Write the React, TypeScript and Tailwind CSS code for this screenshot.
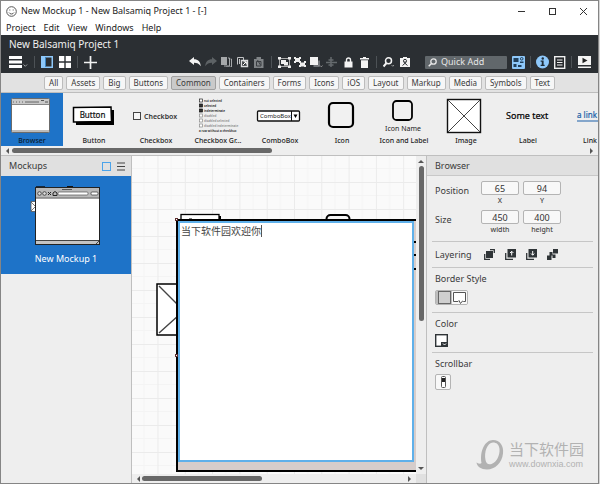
import { useState } from "react";
import type { ReactNode } from "react";

const CHIPS = ["All", "Assets", "Big", "Buttons", "Common", "Containers", "Forms", "Icons", "iOS", "Layout", "Markup", "Media", "Symbols", "Text"];

const GROUP_ROWS = [
  { text: "not selected", color: "#222", box: true },
  { text: "selected", color: "#111", box: true, on: true },
  { text: "indeterminate", color: "#111", box: true, on: true },
  { text: "disabled", color: "#888", box: true },
  { text: "disabled selected", color: "#888", box: true },
  { text: "disabled indeterminate", color: "#888", box: true },
  { text: "a row without a checkbox", color: "#222", box: false },
];

function ToolButton({ label, children, className = "w-4" }: { label: string; children: ReactNode; className?: string }) {
  return (
    <button type="button" aria-label={label} className={`flex h-4 shrink-0 items-center justify-center ${className}`}>
      {children}
    </button>
  );
}

function Separator({ wide = false }: { wide?: boolean }) {
  return (
    <span className={`flex shrink-0 justify-center ${wide ? "w-[9px]" : "w-px"}`}>
      <span className="h-3 w-px bg-[#4d5256]" />
    </span>
  );
}

function Arrow({ dir }: { dir: "left" | "right" | "up" | "down" }) {
  const points = {
    left: "5,0 5,6 2,3",
    right: "1,0 1,6 4,3",
    up: "0,5 6,5 3,2",
    down: "0,1 6,1 3,4",
  }[dir];
  return (
    <svg width="6" height="6" viewBox="0 0 6 6" className="shrink-0" aria-hidden="true">
      <polygon points={points} fill="#555" />
    </svg>
  );
}

function LibraryItem({ name, selected = false, children }: { name: string; selected?: boolean; children: ReactNode }) {
  return (
    <button
      type="button"
      className={`flex w-[62px] shrink-0 flex-col items-center ${selected ? "bg-[#1e73c8] text-[#0c1a2c]" : "text-[#222]"}`}
    >
      <svg width="62" height="42" viewBox="0 0 62 42" className="shrink-0" aria-hidden="true">
        {children}
      </svg>
      <span className="text-[7px] leading-[11px] font-medium whitespace-nowrap">{name}</span>
    </button>
  );
}

function Library() {
  return (
    <div className="flex h-[54px] shrink-0 overflow-hidden border-t border-[#bdbdbd] bg-[#eeeeee]">
      <LibraryItem name="Browser" selected>
        <rect x="10.500" y="5.500" width="38" height="34" rx="1" fill="#fff" stroke="#6b6b6b" />
        <rect x="11" y="6" width="37" height="5" fill="#c9c9c9" />
        <path d="M12 9h1M15 9h1M18 9h1M21 9h1M24 9h14" stroke="#666" />
        <path d="M40 7.500h3M44 9h3" stroke="#555" />
        <path d="M11 11.500h37" stroke="#888" />
        <rect x="11" y="37" width="37" height="2" fill="#bbb" />
      </LibraryItem>
      <LibraryItem name="Button">
        <path d="M13 17h38v15H13z" fill="#000" />
        <path d="M10.500 14.500l37.500-.5.500 14.500-38 .5z" fill="#fff" stroke="#000" strokeWidth="1.500" />
        <text x="29.500" y="25" fontSize="8" textAnchor="middle" fill="#111" stroke="#111" strokeWidth=".2">Button</text>
      </LibraryItem>
      <LibraryItem name="Checkbox">
        <rect x="8.500" y="19.500" width="7" height="7" fill="#f6f6f6" stroke="#444" />
        <text x="19" y="26" fontSize="7" fontWeight="600" fill="#333">Checkbox</text>
      </LibraryItem>
      <LibraryItem name="Checkbox Gr...">
        {GROUP_ROWS.map((row, i) => (
          <g key={row.text}>
            {row.box && <rect x="12.500" y={6 + i * 5} width="3" height="3" fill={row.on ? "#333" : "#fff"} stroke={row.color} strokeWidth=".7" />}
            <text x={row.box ? 17 : 12} y={9 + i * 5} fontSize="3" fontWeight="600" fill={row.color}>{row.text}</text>
          </g>
        ))}
      </LibraryItem>
      <LibraryItem name="ComboBox">
        <rect x="8.500" y="18" width="42" height="10" rx="1" fill="#fff" stroke="#111" strokeWidth="1.300" />
        <path d="M42.500 18v10" stroke="#111" />
        <path d="M44.500 21.500h4l-2 3.500z" fill="#000" />
        <text x="11" y="25" fontSize="6" fill="#222">ComboBox</text>
      </LibraryItem>
      <LibraryItem name="Icon">
        <rect x="18" y="10" width="24" height="24" rx="4" fill="#f1f1f1" stroke="#000" strokeWidth="2.200" />
      </LibraryItem>
      <LibraryItem name="Icon and Label">
        <rect x="20" y="8" width="19" height="19" rx="3.500" fill="#f1f1f1" stroke="#000" strokeWidth="1.800" />
        <text x="30" y="38" fontSize="7" textAnchor="middle" fill="#222">Icon Name</text>
      </LibraryItem>
      <LibraryItem name="Image">
        <rect x="12.500" y="6.500" width="33" height="33" fill="#fff" stroke="#111" strokeWidth="1.400" />
        <path d="M13 7l32 32M45 7L13 39" stroke="#444" />
      </LibraryItem>
      <LibraryItem name="Label">
        <text x="9" y="26" fontSize="9" fill="#000" stroke="#000" strokeWidth=".2">Some text</text>
      </LibraryItem>
      <LibraryItem name="Link">
        <text x="18" y="25" fontSize="8" fill="#1a5fa8" stroke="#1a5fa8" strokeWidth=".2">a link</text>
        <path d="M18 28h22" stroke="#1a5fa8" />
      </LibraryItem>
    </div>
  );
}

function Toolbar() {
  return (
    <div className="flex h-5 items-center">
      <div className="flex items-center gap-1.5">
        <ToolButton label="Menu" className="w-[19px]">
          <svg width="19" height="14" viewBox="0 0 19 14">
            <path d="M0 2.500h13M0 7h13M0 11.500h13" stroke="#fff" strokeWidth="2.800" />
            <path d="M14.500 9.500l1.800 1.800 1.800-1.800" stroke="#9a9da0" fill="none" />
          </svg>
        </ToolButton>
        <Separator />
        <ToolButton label="Toggle navigator" className="w-3">
          <svg width="12" height="12" viewBox="0 0 12 12">
            <rect width="12" height="12" fill="#8ec8fa" />
            <rect x="5" y="1.500" width="5.500" height="9" fill="#2b2f33" />
            <path d="M4.500 1v10" stroke="#3c84c0" />
          </svg>
        </ToolButton>
        <ToolButton label="Grid view" className="w-3">
          <svg width="12" height="12" viewBox="0 0 12 12">
            <path d="M0 0h5.300v5.300H0zM6.700 0H12v5.300H6.700zM0 6.700h5.300V12H0zM6.700 6.700H12V12H6.700z" fill="#fff" />
          </svg>
        </ToolButton>
        <Separator />
        <ToolButton label="New mockup" className="w-[13px]">
          <svg width="13" height="13" viewBox="0 0 13 13">
            <path d="M6.500 0v13M0 6.500h13" stroke="#f2f2f2" strokeWidth="1.700" />
          </svg>
        </ToolButton>
      </div>

      <div className="ml-auto flex items-center">
        <ToolButton label="Undo">
          <svg width="12" height="10" viewBox="0 0 12 10">
            <path d="M0 4L5 0v2.300c4 0 6.500 2.500 6.800 7C10.200 6.700 8 5.700 5 5.700V8z" fill="#f4f4f4" />
          </svg>
        </ToolButton>
        <ToolButton label="Redo">
          <svg width="12" height="10" viewBox="0 0 12 10">
            <path d="M12 4L7 0v2.300c-4 0-6.500 2.500-6.800 7C1.800 6.700 4 5.700 7 5.700V8z" fill="#5d6265" />
          </svg>
        </ToolButton>
        <ToolButton label="Copy">
          <svg width="12" height="10" viewBox="0 0 12 10">
            <path d="M0 0h6v8H0z" fill="#a5a8aa" />
            <path d="M7 1h1.500v8H3M9.500 2h1v8H5" stroke="#a5a8aa" fill="none" />
          </svg>
        </ToolButton>
        <ToolButton label="Duplicate">
          <svg width="12" height="11" viewBox="0 0 12 11">
            <path d="M.5 7.500v-7h6V3M2.500 2v5" stroke="#c0c2c4" fill="none" />
            <path d="M4.500 3.500h6v6h-6z" stroke="#dcdddf" fill="#2b2f33" strokeWidth="1.400" />
            <path d="M6 8l3-3M6.500 4.800H9.300V7.500" stroke="#fff" fill="none" />
          </svg>
        </ToolButton>
        <ToolButton label="Paste">
          <svg width="10" height="11" viewBox="0 0 10 11">
            <path d="M0 2h2.500V0h4.500v2H9.500v9H0z" fill="#808487" />
            <path d="M2.500 4.500h4.500v4.500H2.500zM3.500 3l3 5" stroke="#3a3e42" fill="none" />
          </svg>
        </ToolButton>
        <Separator wide />
        <ToolButton label="Group">
          <svg width="13" height="11" viewBox="0 0 13 11">
            <path d="M1.500 1.500h10v8h-10z" stroke="#aaa" fill="none" />
            <path d="M0 0h3v2.500H0zM10 0h3v2.500h-3zM0 8.500h3V11H0zM10 8.500h3V11h-3zM3 3h5v4H3zM6 5h4v3.500H6z" fill="#eee" />
          </svg>
        </ToolButton>
        <ToolButton label="Ungroup">
          <svg width="12" height="10" viewBox="0 0 12 10">
            <path d="M0 0h2v1h3V0h2v2H6v2h1v2H5V5H2v1H0V4h1V2H0zM5 5h2v1h3V4h2v2h-1v2h1v2h-2V9H7v1H5V8h1V6H5z" fill="#eee" />
            <path d="M1 1h5v4H1zM6.500 5.500H11v4H6.500z" fill="#eee" />
          </svg>
        </ToolButton>
        <ToolButton label="Layering">
          <svg width="13" height="11" viewBox="0 0 13 11">
            <path d="M0 0h8v8H0z" fill="#f2f2f2" />
            <path d="M9 3.500V9H3.500" stroke="#888b8e" fill="none" strokeWidth="1.500" />
            <path d="M10 8.500l1.300 1.300 1.300-1.300" stroke="#999" fill="none" />
          </svg>
        </ToolButton>
        <ToolButton label="Align">
          <svg width="13" height="11" viewBox="0 0 13 11">
            <path d="M5 0v10M2.500 3h5M0 5.500h11M2.500 8h5" stroke="#666b6e" strokeWidth="1.500" />
          </svg>
        </ToolButton>
        <ToolButton label="Lock">
          <svg width="9" height="11" viewBox="0 0 9 11">
            <path d="M.5 4.500h8V10.500h-8z" fill="#f4f4f4" />
            <path d="M2.500 5V3a2 2 0 014 0v2" stroke="#f4f4f4" fill="none" strokeWidth="1.400" />
          </svg>
        </ToolButton>
        <ToolButton label="Delete">
          <svg width="9" height="11" viewBox="0 0 9 11">
            <path d="M0 1h3V0h3v1h3v1.500H0zM1 3.300h7V11H1z" fill="#f4f4f4" />
          </svg>
        </ToolButton>
        <Separator wide />
        <ToolButton label="Zoom">
          <svg width="12" height="11" viewBox="0 0 12 11">
            <circle cx="5.500" cy="3.800" r="3" fill="none" stroke="#f4f4f4" strokeWidth="1.500" />
            <path d="M3.500 6L.5 9.500" stroke="#f4f4f4" strokeWidth="2" />
            <path d="M8.500 8l1.300 1.300L11 8" stroke="#999" fill="none" />
          </svg>
        </ToolButton>
        <ToolButton label="Toggle markup">
          <svg width="10" height="11" viewBox="0 0 10 11">
            <path d="M0 1h3V0h4v1h3v9H0z" fill="#f4f4f4" />
            <circle cx="5" cy="3.800" r="1.500" fill="none" stroke="#2b2f33" />
            <path d="M2.500 8.500L6.500 5M7.500 8.500L3.500 5" stroke="#2b2f33" />
          </svg>
        </ToolButton>
      </div>

      <div className="ml-3 flex items-center gap-[5px]">
        <label className="flex h-[13px] w-[82px] items-center gap-1 rounded-[1px] bg-[#61676b] pl-[3px]">
          <svg width="9" height="9" viewBox="0 0 9 9" className="shrink-0" aria-hidden="true">
            <circle cx="5.500" cy="3.500" r="2.700" fill="none" stroke="#e8e8e8" strokeWidth="1.300" />
            <path d="M3.500 5.500L.7 8.300" stroke="#e8e8e8" strokeWidth="1.500" />
          </svg>
          <input type="text" aria-label="Quick Add" placeholder="Quick Add" className="w-full min-w-0 bg-transparent text-[9px] leading-3 outline-none placeholder:text-[#e6e6e6]" />
        </label>
        <ToolButton label="UI library" className="w-[13px]">
          <svg width="13" height="13" viewBox="0 0 13 13">
            <rect width="13" height="13" rx="1" fill="#8ec8fa" />
            <path d="M1.500 2h5v4h-5zM8 5.500h3.500V7H8zM1.500 8h3v3h-3zM6 9h3.500v2H6z" fill="#21405c" />
            <circle cx="9.700" cy="2.800" r="1.300" fill="none" stroke="#21405c" />
          </svg>
        </ToolButton>
        <Separator />
        <ToolButton label="Inspector" className="w-[13px]">
          <svg width="14" height="14" viewBox="0 0 14 14">
            <circle cx="7" cy="7" r="7" fill="#8ec8fa" />
            <circle cx="7.300" cy="3.300" r="1.300" fill="#1e2c38" />
            <path d="M5 5.500h3.200v4.500H9.300v1.200H5V10h1.200V6.700H5z" fill="#1e2c38" />
          </svg>
        </ToolButton>
        <ToolButton label="Project information" className="w-3">
          <svg width="12" height="13" viewBox="0 0 12 13">
            <rect x=".7" y=".7" width="10" height="11.600" fill="#26292c" stroke="#f0f0f0" strokeWidth="1.400" />
            <path d="M3 4h5.500M3 6.500h5.500M3 9h5.500" stroke="#f0f0f0" strokeWidth="1.200" />
          </svg>
        </ToolButton>
        <Separator />
        <ToolButton label="Full screen presentation" className="w-[14px]">
          <svg width="13" height="12" viewBox="0 0 13 12">
            <path d="M0 0h13v9H0zM0 10.500h13V12H0z" fill="#f4f4f4" />
            <path d="M4.500 1.800l5 2.700-5 2.700z" fill="#222" />
          </svg>
        </ToolButton>
      </div>
    </div>
  );
}

function Navigator() {
  return (
    <aside className="flex w-[131px] shrink-0 flex-col border-r border-[#bfbfbf] bg-[#eeeeee]">
      <div className="flex h-5 shrink-0 items-center gap-1.5 bg-[#e0e0e0] pr-[6px] pl-2">
        <h2 className="mr-auto text-[9px] text-[#3a3a3a]">Mockups</h2>
        <button type="button" aria-label="Thumbnails" className="size-[9px] border border-[#4ba3ea]" />
        <button type="button" aria-label="List">
          <svg width="8" height="9" viewBox="0 0 8 9">
            <path d="M0 1h8M0 4.500h8M0 8h8" stroke="#444" />
          </svg>
        </button>
      </div>
      <button type="button" className="flex h-[98px] flex-col items-center bg-[#1e73c8] pt-2.5 text-white">
        <svg width="72" height="62" viewBox="0 0 72 62" className="shrink-0" aria-hidden="true">
          <path d="M6 1h9M37 .8h6" stroke="#111" strokeWidth="1.500" />
          <path d="M5 15.500H1v10h4M1 16l4 4M1 25l4-4" stroke="#555" fill="#fff" strokeWidth=".8" />
          <rect x="5.500" y="1.500" width="64" height="57" fill="#fff" stroke="#222" />
          <rect x="6" y="2" width="63" height="9.500" fill="#b9b9b9" />
          <path d="M32 3.500h10" stroke="#555" />
          <circle cx="9.500" cy="7.500" r="1.800" fill="#ddd" stroke="#333" strokeWidth=".8" />
          <circle cx="14.500" cy="7.500" r="1.800" fill="#ddd" stroke="#333" strokeWidth=".8" />
          <path d="M18 6l3 3M21 6l-3 3M23 7l2-1.500L27 7v2.500h-4z" stroke="#222" fill="none" />
          <rect x="28" y="6" width="30" height="3" rx="1" fill="#fff" stroke="#555" strokeWidth=".7" />
          <rect x="61" y="6" width="7" height="3" rx="1" fill="#fff" stroke="#333" strokeWidth=".7" />
          <path d="M6 12h63" stroke="#444" />
          <rect x="6" y="55" width="63" height="3" fill="#c4c4c4" />
          <path d="M6 54.500h63M66 58l3-3" stroke="#444" />
        </svg>
        <span className="mt-[5px] text-[9px] leading-3">New Mockup 1</span>
      </button>
    </aside>
  );
}

function Canvas() {
  const [text, setText] = useState("当下软件园欢迎你");
  return (
    <div className="grid min-w-0 flex-1 grid-cols-[minmax(0,1fr)_10px] grid-rows-[minmax(0,1fr)_9px]">
      <div className="relative overflow-hidden bg-[#fafafa]">
        <svg width="100%" height="100%" className="absolute inset-0" aria-hidden="true">
          <defs>
            <pattern id="grid" x="25.500" y="26" width="27.300" height="27" patternUnits="userSpaceOnUse">
              <path d="M13.700 0v27M0 13.500h27.300" stroke="#f4f4f4" />
              <path d="M.5 0v27M0 .5h27.300" stroke="#ebebeb" />
            </pattern>
          </defs>
          <rect width="100%" height="100%" fill="url(#grid)" />
          <rect x="49" y="58.500" width="38" height="20" fill="#fff" stroke="#000" strokeWidth="1.300" />
          <path d="M88 60v10" stroke="#000" strokeWidth="2" />
          <path d="M57 63h3" stroke="#000" />
          <rect x="194.500" y="59" width="23" height="24" rx="4" fill="#f4f4f4" stroke="#000" strokeWidth="2" />
          <rect x="25" y="128" width="40" height="51" fill="#fff" stroke="#000" strokeWidth="1.500" />
          <path d="M27 130l20 20M27 177l20-18" stroke="#444" strokeWidth="1.400" />
        </svg>
        <div className="absolute top-[63px] bottom-[2px] left-[44px] w-[450px] border-2 border-black bg-[#d6cdcb]" />
        <span className="absolute top-[85px] right-0 h-0.5 w-[3px] bg-black shadow-[0_13px_0_#000,0_27px_0_#000]" />
        <textarea
          aria-label="Browser content"
          value={text}
          onChange={(e) => setText(e.target.value)}
          className="absolute top-[65px] right-[2px] bottom-[12px] left-[46px] resize-none overflow-hidden border-2 border-[#5fb0ea] bg-white px-px py-0.5 font-['Noto_Sans_CJK_SC',sans-serif] text-[10px] leading-3 text-[#444] outline-none"
        />
        <span className="absolute top-[69px] left-[129px] h-3 w-px bg-[#555]" />
        <span className="absolute top-[62px] left-[43px] size-[3px] border border-[#5d2f2f] bg-white" />
        <span className="absolute top-[198px] left-[43px] size-[3px] border border-[#5d2f2f] bg-white" />
      </div>
      <div className="flex flex-col items-center justify-between bg-[#eeeeee] py-[2px]">
        <Arrow dir="up" />
        <div className="mt-0.5 mb-auto h-[155px] w-[5px] rounded-full bg-[#686868]" />
        <Arrow dir="down" />
      </div>
      <div className="flex items-center justify-between bg-[#eeeeee] px-[3px]">
        <Arrow dir="left" />
        <div className="mr-auto ml-px h-[5px] w-[120px] rounded-full bg-[#686868]" />
        <Arrow dir="right" />
      </div>
      <div className="bg-[#e0e0e0]" />
    </div>
  );
}

function NumberField({ caption, value }: { caption: string; value: string }) {
  return (
    <label className="flex flex-col items-center text-[7px] leading-3 font-medium text-[#444]">
      <input
        type="text"
        defaultValue={value}
        className="h-[14px] w-[38px] rounded-[2px] border border-[#b4b4b4] bg-[#f8f8f8] text-center text-[9px] leading-3 font-normal text-[#333] outline-none"
      />
      <span>{caption}</span>
    </label>
  );
}

function Section({ title, children }: { title: string; children: ReactNode }) {
  return (
    <section className="flex flex-col items-start border-t border-[#c6c6c6] pl-[3px]">
      <h3 className="pt-[5px] text-[9px] leading-3">{title}</h3>
      {children}
    </section>
  );
}

function Inspector() {
  return (
    <aside className="flex w-[172px] shrink-0 flex-col border-l border-[#bfbfbf] bg-[#eeeeee] text-[#3a3a3a]">
      <h2 className="h-5 shrink-0 border-b border-[#c8c8c8] bg-[#e0e0e0] pl-2 text-[9px] leading-5">Browser</h2>
      <div className="flex flex-1 flex-col px-[5px] pt-[5px]">
        <div className="flex flex-col gap-[3px] pb-[5px] pl-[3px]">
          <div className="flex gap-1">
            <span className="w-[42px] pt-[3px] text-[9px] leading-[14px]">Position</span>
            <NumberField caption="X" value="65" />
            <NumberField caption="Y" value="94" />
          </div>
          <div className="flex gap-1">
            <span className="w-[42px] pt-[3px] text-[9px] leading-[14px]">Size</span>
            <NumberField caption="width" value="450" />
            <NumberField caption="height" value="400" />
          </div>
        </div>

        <div className="flex h-[26px] items-center gap-[10px] border-t border-[#c6c6c6] pl-[3px]">
          <span className="w-[39px] text-[9px] leading-3">Layering</span>
          <button type="button" aria-label="Bring to front">
            <svg width="11" height="11" viewBox="0 0 11 11">
              <path d="M2 2h7v7H2z" fill="#2f3437" />
              <path d="M.7 5v5.300H6M6 .7h4.300V4" stroke="#2f3437" fill="none" strokeWidth="1.300" />
            </svg>
          </button>
          <button type="button" aria-label="Bring forward">
            <svg width="11" height="11" viewBox="0 0 11 11">
              <path d="M2.500 0H11v8.500H2.500z" fill="#2f3437" />
              <path d="M.7 4v6.300H8" stroke="#2f3437" fill="none" strokeWidth="1.300" />
              <path d="M6.700 6.500v-4M5 4l1.700-1.700L8.400 4" stroke="#fff" fill="none" />
            </svg>
          </button>
          <button type="button" aria-label="Send backward">
            <svg width="11" height="11" viewBox="0 0 11 11">
              <path d="M2.500 0H11v8.500H2.500z" fill="#2f3437" />
              <path d="M.7 4v6.300H8" stroke="#2f3437" fill="none" strokeWidth="1.300" />
              <path d="M6.700 2v4M5 4.500l1.700 1.700 1.700-1.700" stroke="#fff" fill="none" />
            </svg>
          </button>
          <button type="button" aria-label="Send to back">
            <svg width="11" height="11" viewBox="0 0 11 11">
              <path d="M6 0h5v4.500H6zM0 6.500h4.500V11H0zM2.500 3h3v2.500h3V9h-3V6.500h-3z" fill="#2f3437" />
            </svg>
          </button>
        </div>

        <Section title="Border Style">
          <div className="mt-[5px] mb-[7px] flex h-[15px] w-[33px] overflow-hidden rounded-[2px] border border-[#b4b4b4]">
            <button type="button" aria-label="Plain border" className="flex w-4 items-center justify-center bg-[#bdbdbd]">
              <svg width="13" height="13" viewBox="0 0 13 13">
                <rect x=".5" y=".5" width="12" height="12" fill="#cfcfcf" stroke="#666" />
              </svg>
            </button>
            <button type="button" aria-label="Torn border" className="flex flex-1 items-center justify-center bg-[#f8f8f8]">
              <svg width="13" height="12" viewBox="0 0 13 12">
                <path d="M.5 .5h12v9H10.500L9.500 9 7.500 11.500 6 8.500 5 9.500H.5z" fill="#fff" stroke="#555" />
              </svg>
            </button>
          </div>
        </Section>
        <Section title="Color">
          <button type="button" aria-label="Pick color" className="mt-1 mb-[5px]">
            <svg width="13" height="13" viewBox="0 0 13 13">
              <rect x=".7" y=".7" width="11.600" height="11.600" fill="#fff" stroke="#2f3437" strokeWidth="1.400" />
              <path d="M6 8h6v4H6z" fill="#2f3437" />
              <path d="M8 9.500l1.500 1.500L11 9.500" stroke="#fff" fill="none" />
            </svg>
          </button>
        </Section>
        <Section title="Scrollbar">
          <button type="button" aria-label="Vertical scrollbar" className="mt-1 flex size-4 items-center justify-center rounded-[2px] border border-[#b4b4b4] bg-[#f8f8f8]">
            <svg width="5" height="12" viewBox="0 0 5 12">
              <rect x=".5" y=".5" width="4" height="11" rx="1" fill="#fff" stroke="#555" />
              <path d="M1 2h3v4H1z" fill="#222" />
            </svg>
          </button>
        </Section>

        <div className="mt-auto mb-[13px] ml-auto flex items-center gap-[5px] pr-[9px] text-[#b2b2b2]">
          <svg width="28" height="30" viewBox="0 0 28 30" aria-hidden="true">
            <path
              fillRule="evenodd"
              d="M17 0c7 0 11 6 10 13.500C26 23 19 29.500 11 29.500 5 29.500 1 26.500.5 22.500 3 24 4.500 24 5.500 23 3.500 11 9 0 17 0zM17 2.500C11 3 8 12 9.500 20c.5 3.500 3 5 6 4C21 22 24 15 23.500 9c-.5-4.500-3-6.500-6.500-6.500z"
              fill="#b2b2b2"
            />
          </svg>
          <div className="flex flex-col">
            <span className="font-['Noto_Sans_CJK_SC',sans-serif] text-[15px] leading-[18px]">当下软件园</span>
            <a href="#site" className="font-['Liberation_Sans',sans-serif] text-[9px] leading-3">www.downxia.com</a>
          </div>
        </div>
      </div>
    </aside>
  );
}

export default function App() {
  const [active, setActive] = useState("Common");
  return (
    <div className="h-screen bg-[#d5d5d5] pr-px font-['Noto_Sans','Noto_Sans_CJK_SC',sans-serif]">
      <div className="flex h-full flex-col overflow-hidden border border-[#858585] bg-white">
        <header className="flex h-5 shrink-0 items-center pl-[5px] text-[#222]">
          <svg width="11" height="11" viewBox="0 0 11 11" aria-hidden="true">
            <circle cx="5.500" cy="5.500" r="4.800" fill="none" stroke="#555" />
            <path d="M3.800 3.500v1M7.200 3.500v1M3 6.500c1 2 4 2 5 0" stroke="#555" fill="none" />
          </svg>
          <h1 className="ml-1 text-[9px] leading-3">New Mockup 1 - New Balsamiq Project 1 - [-]</h1>
          <div className="mr-[11px] ml-auto flex items-center gap-6">
            <button type="button" aria-label="Minimize">
              <svg width="7" height="7" viewBox="0 0 7 7"><path d="M0 3.500h7" stroke="#333" /></svg>
            </button>
            <button type="button" aria-label="Maximize">
              <svg width="7" height="7" viewBox="0 0 7 7"><rect x=".5" y=".5" width="6" height="6" fill="none" stroke="#333" /></svg>
            </button>
            <button type="button" aria-label="Close">
              <svg width="7" height="7" viewBox="0 0 7 7"><path d="M0 0l7 7M7 0L0 7" stroke="#333" /></svg>
            </button>
          </div>
        </header>
        <nav className="flex h-[14px] shrink-0 items-center gap-2 pl-[5px] text-[9px] leading-3 text-[#222]">
          {["Project", "Edit", "View", "Windows", "Help"].map((item) => (
            <button key={item} type="button">{item}</button>
          ))}
        </nav>

        <div className="flex h-[38px] shrink-0 flex-col bg-[#2b2f33] pr-[7px] pl-2">
          <div className="h-[17px] text-[10px] leading-[18px] text-[#f0f0f0]">New Balsamiq Project 1</div>
          <Toolbar />
        </div>

        <div className="flex h-[19px] shrink-0 items-center justify-center gap-[3px] bg-[#e2e2e2]">
          {CHIPS.map((chip) => (
            <button
              key={chip}
              type="button"
              aria-pressed={chip === active}
              onClick={() => setActive(chip)}
              className={`h-[14px] rounded-[2px] border px-1 text-[8px] leading-3 text-[#3a3a3a] ${
                chip === active ? "border-[#a0a0a0] bg-[#cacaca]" : "border-[#bcbcbc] bg-[#f6f6f6]"
              }`}
            >
              {chip}
            </button>
          ))}
        </div>

        <Library />
        <div className="flex h-[10px] shrink-0 items-center justify-between border-b border-[#bfbfbf] bg-[#eeeeee] px-[3px]">
          <Arrow dir="left" />
          <div className="mr-auto ml-0.5 h-[5px] w-[260px] rounded-full bg-[#686868]" />
          <Arrow dir="right" />
        </div>

        <main className="flex min-h-0 flex-1">
          <Navigator />
          <Canvas />
          <Inspector />
        </main>
      </div>
    </div>
  );
}
